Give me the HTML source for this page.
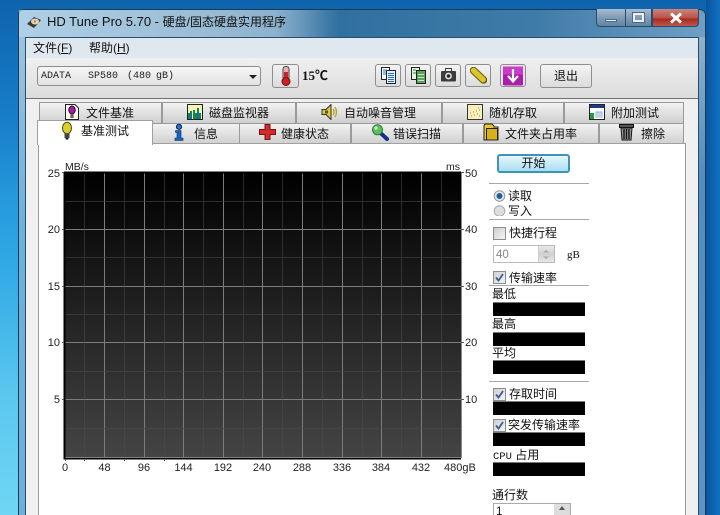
<!DOCTYPE html>
<html><head><meta charset="utf-8">
<style>
html,body{margin:0;padding:0;width:720px;height:515px;overflow:hidden}
body{position:relative;font-family:"Liberation Sans","Noto Sans CJK SC",sans-serif;font-size:12px;color:#111;background:linear-gradient(180deg,#1272bd 0,#1a86d2 120px,#2fa8e4 260px,#5cc8ef 400px,#6fd6f4 515px)}
.a{position:absolute}
.t{position:absolute;white-space:nowrap;line-height:14px}
.tab{position:absolute;box-sizing:border-box;border:1px solid #9a9a9a;border-bottom:none;background:linear-gradient(180deg,#f2f2f2,#cfcfcf);height:21px}
.tab span{position:absolute;white-space:nowrap;top:3px;font-size:12px;line-height:15px}
.tb{position:absolute;top:64px;width:26px;height:23px;box-sizing:border-box;border:1px solid #8e8e8e;border-radius:3px;background:linear-gradient(180deg,#f4f4f4,#dcdcdc)}
.bar{position:absolute;left:493px;width:92px;height:14px;background:#000;border-top:1px solid #777;box-sizing:border-box}
.hr{position:absolute;left:489px;width:100px;height:1px;background:#a8a8a8}
.cb{position:absolute;left:493px;width:11px;height:11px;box-sizing:border-box;border:1px solid #8d8d8d;background:linear-gradient(135deg,#cfcfcf,#f4f4f4)}
.lb{position:absolute;white-space:nowrap;font-size:12px;line-height:14px}
.m{font-family:"Liberation Mono",monospace;font-size:10px;position:absolute;top:70px;line-height:14px;white-space:pre;color:#222}
</style></head><body>
<div class="a" style="left:0;top:0;width:720px;height:515px;background:linear-gradient(180deg,rgba(0,40,110,.2) 0,rgba(0,40,110,0) 200px)"></div>
<div class="a" style="left:706px;top:0;width:14px;height:515px;background:linear-gradient(90deg,#0a549c,#1172c2)"></div>
<div class="a" style="left:18px;top:9px;width:688px;height:506px;box-sizing:border-box;border:1px solid #1d3a55;border-bottom:none;border-radius:6px 6px 0 0;background:linear-gradient(90deg,#7fb9dd 0,#5a8fb6 28%,#2f6f9f 45%,#3f7ba8 75%,#6f9fc4 100%)"></div>
<div class="a" style="left:19px;top:10px;width:320px;height:27px;background:linear-gradient(90deg,rgba(200,220,235,.65),rgba(190,212,230,.6) 80%,rgba(200,220,235,0))"></div>
<div class="a" style="left:19px;top:37px;width:6px;height:478px;background:linear-gradient(180deg,#9cc3de,#6cb0dc 40%)"></div>
<div class="a" style="left:699px;top:37px;width:6px;height:478px;background:linear-gradient(180deg,#8fb1cd,#4f8cc0 30%,#5a94c8)"></div>
<svg class="a" style="left:26px;top:15px" width="16" height="15" viewBox="0 0 16 15"><path d="M1 9 L8 2 L15 5 L8 13Z" fill="#3b3b3b"/><ellipse cx="9" cy="6.5" rx="4" ry="3" fill="#e6d3ae"/><circle cx="9" cy="6.5" r="1" fill="#8a7550"/></svg>
<div class="t" style="left:47px;top:15px;font-size:13px;color:#111">HD Tune Pro 5.70 - <span style="font-size:12px">硬盘/固态硬盘实用程序</span></div>
<!-- window buttons -->
<div class="a" style="left:596px;top:9px;width:30px;height:18px;box-sizing:border-box;border:1px solid #2a4a68;border-top:none;border-radius:0 0 0 4px;background:linear-gradient(180deg,#a8bccd,#7f9db6 50%,#5f85a6)"></div>
<div class="a" style="left:605px;top:19px;width:12px;height:3px;background:#f0f0f0;border:1px solid #4a6a88;box-sizing:border-box"></div>
<div class="a" style="left:625px;top:9px;width:27px;height:18px;box-sizing:border-box;border:1px solid #2a4a68;border-top:none;background:linear-gradient(180deg,#a8bccd,#7f9db6 50%,#5f85a6)"></div>
<div class="a" style="left:633px;top:13px;width:11px;height:9px;box-sizing:border-box;border:2px solid #f0f0f0;outline:1px solid #4a6a88"></div>
<div class="a" style="left:652px;top:9px;width:47px;height:18px;box-sizing:border-box;border:1px solid #2a4a68;border-top:none;border-radius:0 0 4px 0;background:linear-gradient(180deg,#c9867e,#bd5449 50%,#a92a20 60%,#bd5a4c)"></div>
<svg class="a" style="left:669px;top:12px" width="14" height="12" viewBox="0 0 14 12"><path d="M2 1.5 L12 10.5 M12 1.5 L2 10.5" stroke="#fff" stroke-width="3"/></svg>
<!-- client -->
<div class="a" style="left:25px;top:37px;width:674px;height:478px;box-sizing:border-box;background:#f0f0f0;border:1px solid #2c4c6c;border-bottom:none"></div>
<div class="a" style="left:26px;top:38px;width:672px;height:20px;background:#dfe7ef"></div>
<div class="a" style="left:26px;top:58px;width:672px;height:40px;background:linear-gradient(180deg,#f0f0f0,#dcdcdc)"></div>
<div class="a" style="left:26px;top:98px;width:672px;height:1px;background:#707070"></div>
<div class="t" style="left:33px;top:41px;font-size:12px">文件(<u>F</u>)</div>
<div class="t" style="left:89px;top:41px;font-size:12px">帮助(<u>H</u>)</div>
<!-- drive combo -->
<div class="a" style="left:37px;top:66px;width:224px;height:20px;box-sizing:border-box;border:1px solid #8c8c8c;border-radius:3px;background:linear-gradient(180deg,#f6f6f6,#e2e2e2)"></div>
<div class="m" style="left:41px">ADATA</div>
<div class="m" style="left:88px">SP580</div>
<div class="m" style="left:127px">(480</div>
<div class="m" style="left:156px">gB)</div>
<div class="a" style="left:249px;top:75px;width:0;height:0;border:4px solid transparent;border-top:4px solid #222;border-bottom:none"></div>
<!-- thermometer -->
<div class="a" style="left:272px;top:64px;width:27px;height:24px;box-sizing:border-box;border:1px solid #8e8e8e;border-radius:3px;background:linear-gradient(180deg,#f2f2f2,#dcdcdc)"></div>
<svg class="a" style="left:280px;top:66px" width="12" height="20" viewBox="0 0 12 20"><rect x="3" y=".5" width="6" height="14" rx="2.5" fill="#e2b0b0" stroke="#444"/><rect x="4" y="6" width="4" height="9" fill="#d01f28"/><circle cx="6" cy="15.5" r="4" fill="#d01f28" stroke="#6a1414"/></svg>
<div class="t" style="left:302px;top:69px;font-family:'Liberation Serif','Noto Sans CJK SC',serif;font-size:13px;font-weight:bold">15℃</div>
<!-- toolbar -->
<div class="tb" style="left:375px"></div>
<svg class="a" style="left:380px;top:67px" width="17" height="17" viewBox="0 0 17 17"><rect x="1.5" y=".5" width="8" height="12" fill="#fff" stroke="#222"/><rect x="6.5" y="3.5" width="9" height="13" fill="#dff0fb" stroke="#222"/><path d="M8 6.5h6M8 8.5h6M8 10.5h6M8 12.5h6M8 14.5h6" stroke="#2a6fb5"/><path d="M3 3h4M3 5h3M3 7h3" stroke="#2a6fb5"/></svg>
<div class="tb" style="left:405px"></div>
<svg class="a" style="left:410px;top:67px" width="17" height="17" viewBox="0 0 17 17"><rect x="1.5" y=".5" width="8" height="12" fill="#e8f3e4" stroke="#222"/><rect x="6.5" y="3.5" width="9" height="13" fill="#5aa35a" stroke="#222"/><path d="M8 7.5h6M8 10.5h6M8 13.5h6" stroke="#c8e8c0"/><path d="M3 3h3M3 6h3" stroke="#2a8a3a"/></svg>
<div class="tb" style="left:435px"></div>
<svg class="a" style="left:441px;top:68px" width="15" height="14" viewBox="0 0 15 14"><rect x="0" y="3" width="15" height="10.5" rx="1" fill="#3c3c3c"/><rect x="4.5" y="0.5" width="6" height="3" fill="none" stroke="#3c3c3c"/><circle cx="7.5" cy="8" r="3.4" fill="#e4e4e4"/><circle cx="7.5" cy="8" r="1.8" fill="#222"/></svg>
<div class="tb" style="left:465px"></div>
<svg class="a" style="left:470px;top:67px" width="17" height="17" viewBox="0 0 17 17"><path d="M3.5 3.5 L13.5 13" stroke="#6d5c0c" stroke-width="7.5" stroke-linecap="round"/><path d="M3.5 3.5 L13.5 13" stroke="#dcc52c" stroke-width="5.5" stroke-linecap="round" stroke-dasharray="2.4 1.2"/></svg>
<div class="tb" style="left:500px;background:#f0dff0"></div>
<svg class="a" style="left:502px;top:66px" width="22" height="20" viewBox="0 0 22 20"><rect x="1" y="0.5" width="20" height="19" rx="1" fill="#a81fa8"/><rect x="1" y="0.5" width="20" height="8" fill="#c83cc8"/><path d="M11 3 V15 M6 10 L11 15.5 L16 10" stroke="#fff" stroke-width="2.2" fill="none"/></svg>
<div class="a" style="left:540px;top:64px;width:52px;height:24px;box-sizing:border-box;border:1px solid #8e8e8e;border-radius:3px;background:linear-gradient(180deg,#f4f4f4,#dcdcdc);text-align:center;line-height:22px;font-size:12px">退出</div>
<!-- back tabs -->
<div class="tab" style="left:39px;top:102px;width:123px"><span style="left:46px">文件基准</span></div>
<div class="tab" style="left:162px;top:102px;width:134px"><span style="left:46px">磁盘监视器</span></div>
<div class="tab" style="left:296px;top:102px;width:146px"><span style="left:47px">自动噪音管理</span></div>
<div class="tab" style="left:442px;top:102px;width:122px"><span style="left:46px">随机存取</span></div>
<div class="tab" style="left:564px;top:102px;width:120px"><span style="left:46px">附加测试</span></div>
<!-- front tabs -->
<div class="tab" style="left:152px;top:123px;width:88px"><span style="left:41px">信息</span></div>
<div class="tab" style="left:239px;top:123px;width:112px"><span style="left:41px">健康状态</span></div>
<div class="tab" style="left:351px;top:123px;width:112px"><span style="left:41px">错误扫描</span></div>
<div class="tab" style="left:463px;top:123px;width:136px"><span style="left:41px">文件夹占用率</span></div>
<div class="tab" style="left:599px;top:123px;width:85px"><span style="left:41px">擦除</span></div>
<!-- panel -->
<div class="a" style="left:38px;top:143px;width:648px;height:372px;box-sizing:border-box;background:#fff;border:1px solid #9a9a9a;border-top:none;border-bottom:none"></div>
<div class="a" style="left:38px;top:143px;width:648px;height:1px;background:#a0a0a0"></div>
<div class="a" style="left:37px;top:120px;width:116px;height:25px;box-sizing:border-box;background:#fff;border:1px solid #a0a0a0;border-bottom:none"></div>
<div class="t" style="left:81px;top:124px;font-size:12px;line-height:15px">基准测试</div>
<!-- tab icons -->
<svg class="a" style="left:64px;top:103px" width="16" height="18" viewBox="0 0 16 18"><path d="M1.5 1.5H11L14.5 5V16.5H1.5Z" fill="#fdfdf0" stroke="#222"/><ellipse cx="8" cy="7" rx="3.2" ry="4" fill="#a020a0" stroke="#303"/><rect x="6.3" y="11.5" width="3.4" height="3.5" fill="#666"/></svg>
<svg class="a" style="left:187px;top:104px" width="16" height="16" viewBox="0 0 16 16"><rect x=".5" y=".5" width="15" height="15" fill="#f7f2b8" stroke="#222"/><path d="M1 15V9h2V7h2v8zM6 15V6h2v3h2V4h2v5h2v6z" fill="#118a44"/><path d="M3 15v-5h2v5zM10 15V8h2v7z" fill="#1b62c6"/></svg>
<svg class="a" style="left:321px;top:104px" width="17" height="16" viewBox="0 0 17 16"><path d="M1 5.5H5L10 .5V15.5L5 10.5H1Z" fill="#e0c92e" stroke="#333"/><path d="M4 6.5h3v3h-3z" fill="#555"/><path d="M12 5Q14 8 12 11M14 3Q17 8 14 13" stroke="#b8a32a" stroke-width="1.4" fill="none"/></svg>
<svg class="a" style="left:467px;top:104px" width="16" height="16" viewBox="0 0 16 16"><rect x=".5" y=".5" width="15" height="15" fill="#f9eebb" stroke="#333"/><path d="M4 12h1M7 11h1M10 10h1M6 8h1M9 7h1M12 6h1M11 4h1M3 9h1M12 12h1" stroke="#8a8a50"/></svg>
<svg class="a" style="left:589px;top:104px" width="16" height="16" viewBox="0 0 16 16"><rect x=".5" y=".5" width="15" height="15" fill="#fff" stroke="#222"/><rect x="1" y="1" width="14" height="3" fill="#1d3b8a"/><path d="M1 15V9h4v6z" fill="#1a9a4a"/><path d="M6.5 7.5h7v6h-7z" fill="#8ea8c8"/><path d="M8 8v5M10 8v5M12 8v5M7 10h6M7 12h6" stroke="#fff" stroke-width=".6"/></svg>
<svg class="a" style="left:61px;top:121px" width="12" height="19" viewBox="0 0 12 19"><ellipse cx="6" cy="7" rx="4.5" ry="5.8" fill="#dbd02a" stroke="#4d480a"/><rect x="3.5" y="12.5" width="5" height="4.5" fill="#444"/><rect x="4.6" y="17" width="2.8" height="1.5" fill="#111"/></svg>
<svg class="a" style="left:173px;top:124px" width="12" height="17" viewBox="0 0 12 17"><circle cx="6" cy="2.8" r="2.6" fill="#1f78d8" stroke="#123"/><path d="M2.5 6.5H8V14H10V16.5H2V14H4V8.5H2.5Z" fill="#1565c8" stroke="#0c2850" stroke-width=".6"/></svg>
<svg class="a" style="left:259px;top:124px" width="17" height="16" viewBox="0 0 17 16"><path d="M6 .5H11V5.5H16.5V10.5H11V15.5H6V10.5H.5V5.5H6Z" fill="#d32a2a" stroke="#7a1414"/></svg>
<svg class="a" style="left:371px;top:124px" width="18" height="17" viewBox="0 0 18 17"><path d="M9.5 9 L16 15" stroke="#1a2f8a" stroke-width="4" stroke-linecap="round"/><circle cx="6.5" cy="5.8" r="5" fill="#5cc05c" stroke="#2a7a3a"/><circle cx="5" cy="4" r="1.6" fill="#cfeecf"/></svg>
<svg class="a" style="left:483px;top:123px" width="16" height="18" viewBox="0 0 16 18"><path d="M1 3 Q1 1 3 1H9L11 3V4H15V17H1Z" fill="#e8c83a" stroke="#222"/><rect x="3.5" y="5.5" width="11" height="11.5" fill="#d9b018" stroke="#222"/></svg>
<svg class="a" style="left:619px;top:123px" width="15" height="18" viewBox="0 0 15 18"><path d="M.5 1.5H14.5V4.5H.5Z" fill="#555" stroke="#111"/><path d="M2 5H13L12 17H3Z" fill="#999" stroke="#111"/><path d="M5 6V16M7.5 6V16M10 6V16" stroke="#111" stroke-width="1.4"/></svg>
<!-- chart -->
<svg class="a" style="left:40px;top:155px" width="450" height="325" viewBox="40 155 450 325">
<defs><linearGradient id="g" x1="0" y1="0" x2="0" y2="1"><stop offset="0" stop-color="#000"/><stop offset="1" stop-color="#444"/></linearGradient></defs>
<rect x="64" y="172" width="397" height="285" fill="url(#g)"/>
<g stroke="#7c7c7c" stroke-width="1" shape-rendering="crispEdges">
<path d="M104.5 172V457M144.5 172V457M183.5 172V457M223.5 172V457M262.5 172V457M302.5 172V457M342.5 172V457M381.5 172V457M421.5 172V457"/>
<path d="M64 229.5H461M64 286.5H461M64 342.5H461M64 399.5H461"/>
</g>
<g stroke="#4c4c4c" stroke-width="1" shape-rendering="crispEdges" opacity=".55">
<path d="M84.5 172V457M124.5 172V457M164.5 172V457M203.5 172V457M243.5 172V457M282.5 172V457M322.5 172V457M362.5 172V457M401.5 172V457M441.5 172V457"/>
<path d="M64 201.5H461M64 257.5H461M64 314.5H461M64 371.5H461M64 428.5H461"/>
</g>
<path d="M64.5 172V458.5H461M64 172.5H461" stroke="#000" stroke-width="2" fill="none" shape-rendering="crispEdges"/>
<path d="M461.5 172V458" stroke="#888" shape-rendering="crispEdges"/>
<g stroke="#555" shape-rendering="crispEdges"><path d="M62 172.5h2M62 229.5h2M62 286.5h2M62 342.5h2M62 399.5h2M461 172.5h3M461 229.5h3M461 286.5h3M461 342.5h3M461 399.5h3M65.5 459v2M84.5 459v2M124.5 459v2M164.5 459v2"/></g>
<g font-family="Liberation Sans" font-size="11" fill="#222">
<text x="65" y="170" font-size="10.5">MB/s</text><text x="446" y="170" font-size="10.5">ms</text>
<g text-anchor="end"><text x="60" y="177">25</text><text x="60" y="233">20</text><text x="60" y="290">15</text><text x="60" y="346">10</text><text x="60" y="403">5</text></g>
<text x="465" y="177">50</text><text x="465" y="233">40</text><text x="465" y="290">30</text><text x="465" y="346">20</text><text x="465" y="403">10</text>
<g text-anchor="middle"><text x="65" y="471">0</text><text x="104.5" y="471">48</text><text x="144" y="471">96</text><text x="183.5" y="471">144</text><text x="223" y="471">192</text><text x="262" y="471">240</text><text x="302" y="471">288</text><text x="342" y="471">336</text><text x="381" y="471">384</text><text x="421" y="471">432</text></g>
<text x="444" y="471">480gB</text>
</g>
</svg>
<!-- right column -->
<div class="a" style="left:497px;top:154px;width:73px;height:19px;box-sizing:border-box;border:2px solid #3f93b8;border-radius:3px;background:linear-gradient(180deg,#e6f6fc,#a9dff0);text-align:center;line-height:15px;font-size:12px">开始</div>
<div class="hr" style="top:183px"></div>
<svg class="a" style="left:493px;top:190px" width="13" height="26" viewBox="0 0 13 26"><circle cx="6.5" cy="6" r="5.3" fill="#e8e8e8" stroke="#999"/><circle cx="6.5" cy="6" r="3" fill="#1f5f99"/><circle cx="6.5" cy="21" r="5.3" fill="#ddd" stroke="#aaa"/></svg>
<div class="lb" style="left:508px;top:189px">读取</div>
<div class="lb" style="left:508px;top:204px">写入</div>
<div class="hr" style="top:219px"></div>
<div class="cb" style="top:227px;width:13px;height:13px"></div>
<div class="lb" style="left:509px;top:226px">快捷行程</div>
<div class="a" style="left:493px;top:245px;width:62px;height:18px;box-sizing:border-box;border:1px solid #bbb;background:#fff"></div>
<div class="t" style="left:496px;top:248px;font-size:11.5px;color:#888">40</div>
<div class="a" style="left:538px;top:246px;width:16px;height:16px;background:linear-gradient(180deg,#e8e8e8,#d0d0d0 50%,#e8e8e8);border-left:1px solid #ccc;box-sizing:border-box"></div>
<svg class="a" style="left:541px;top:249px" width="10" height="11" viewBox="0 0 10 11"><path d="M2 3.5L5 1L8 3.5ZM2 7.5L5 10L8 7.5Z" fill="#aaa"/></svg>
<div class="t" style="left:567px;top:248px;font-size:11px;font-family:'Liberation Serif',serif">gB</div>
<div class="cb" style="top:271px;width:13px;height:13px"></div>
<svg class="a" style="left:494px;top:272px" width="11" height="11" viewBox="0 0 11 11"><path d="M2 5.5L4.5 8.5L9 2" stroke="#3a5a9a" stroke-width="1.8" fill="none"/></svg>
<div class="lb" style="left:509px;top:271px">传输速率</div>
<div class="hr" style="top:285px"></div>
<div class="lb" style="left:492px;top:287px">最低</div>
<div class="bar" style="top:302px"></div>
<div class="lb" style="left:492px;top:317px">最高</div>
<div class="bar" style="top:332px"></div>
<div class="lb" style="left:492px;top:346px">平均</div>
<div class="bar" style="top:360px"></div>
<div class="hr" style="top:381px"></div>
<div class="cb" style="top:388px;width:13px;height:13px"></div>
<svg class="a" style="left:494px;top:389px" width="11" height="11" viewBox="0 0 11 11"><path d="M2 5.5L4.5 8.5L9 2" stroke="#3a5a9a" stroke-width="1.8" fill="none"/></svg>
<div class="lb" style="left:509px;top:387px">存取时间</div>
<div class="bar" style="top:401px"></div>
<div class="cb" style="top:419px;width:13px;height:13px"></div>
<svg class="a" style="left:494px;top:420px" width="11" height="11" viewBox="0 0 11 11"><path d="M2 5.5L4.5 8.5L9 2" stroke="#3a5a9a" stroke-width="1.8" fill="none"/></svg>
<div class="lb" style="left:508px;top:418px">突发传输速率</div>
<div class="bar" style="top:432px"></div>
<div class="lb" style="left:493px;top:448px;font-size:12px"><span style="font-family:'Liberation Mono',monospace;font-size:10.5px">CPU</span> 占用</div>
<div class="bar" style="top:462px"></div>
<div class="lb" style="left:492px;top:488px">通行数</div>
<div class="a" style="left:493px;top:503px;width:78px;height:14px;box-sizing:border-box;border:1px solid #aaa;background:#fff"></div>
<div class="t" style="left:496px;top:505px;font-size:11.5px">1</div>
<div class="a" style="left:554px;top:504px;width:16px;height:11px;background:#ddd"></div>
<svg class="a" style="left:557px;top:505px" width="10" height="6" viewBox="0 0 10 6"><path d="M2 5L5 1L8 5Z" fill="#555"/></svg>
</body></html>
